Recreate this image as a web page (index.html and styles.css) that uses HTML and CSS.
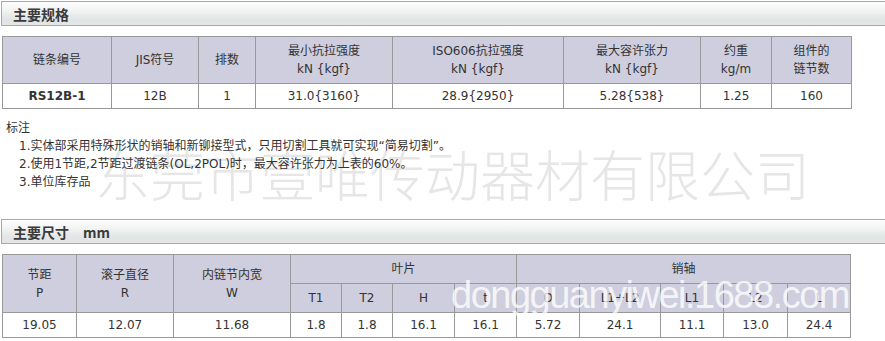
FILE: index.html
```html
<!DOCTYPE html>
<html lang="zh-CN">
<head>
<meta charset="utf-8">
<title>主要规格</title>
<link rel="stylesheet" href="styles.css">
</head>
<body>
<div class="page">
  <div class="watermark wm-cn">东莞市壹唯传动器材有限公司</div>

  <div class="bar"><span class="bar-title">主要规格</span></div>
  <table class="spec spec-main">
    <colgroup>
      <col style="width:109px"><col style="width:87px"><col style="width:57px"><col style="width:137px"><col style="width:171px"><col style="width:137px"><col style="width:71px"><col style="width:80px">
    </colgroup>
    <tr class="head-row tall">
      <th>链条编号</th>
      <th>JIS符号</th>
      <th>排数</th>
      <th>最小抗拉强度<br>kN {kgf}</th>
      <th>ISO606抗拉强度<br>kN {kgf}</th>
      <th>最大容许张力<br>kN {kgf}</th>
      <th>约重<br>kg/m</th>
      <th>组件的<br>链节数</th>
    </tr>
    <tr class="data-row">
      <td class="strong">RS12B-1</td>
      <td>12B</td>
      <td>1</td>
      <td>31.0{3160}</td>
      <td>28.9{2950}</td>
      <td>5.28{538}</td>
      <td>1.25</td>
      <td>160</td>
    </tr>
  </table>

  <div class="notes">
    <div class="notes-title">标注</div>
    <div class="note">1.实体部采用特殊形状的销轴和新铆接型式，只用切割工具就可实现“简易切割”。</div>
    <div class="note">2.使用1节距,2节距过渡链条(OL,2POL)时，最大容许张力为上表的60%。</div>
    <div class="note">3.单位库存品</div>
  </div>

  <div class="bar bar-second"><span class="bar-title">主要尺寸　mm</span></div>
  <table class="spec spec-dim">
    <colgroup>
      <col style="width:74px"><col style="width:97px"><col style="width:117px"><col style="width:51px"><col style="width:51px"><col style="width:62px"><col style="width:62px"><col style="width:63px"><col style="width:81px"><col style="width:63px"><col style="width:64px"><col style="width:63px">
    </colgroup>
    <tr class="head-row mid">
      <th rowspan="2">节距<br>P</th>
      <th rowspan="2">滚子直径<br>R</th>
      <th rowspan="2">内链节内宽<br>W</th>
      <th colspan="4">叶片</th>
      <th colspan="5">销轴</th>
    </tr>
    <tr class="head-row mid">
      <th>T1</th>
      <th>T2</th>
      <th>H</th>
      <th>t</th>
      <th>D</th>
      <th>L1+L2</th>
      <th>L1</th>
      <th>L2</th>
      <th>L</th>
    </tr>
    <tr class="data-row">
      <td>19.05</td>
      <td>12.07</td>
      <td>11.68</td>
      <td>1.8</td>
      <td>1.8</td>
      <td>16.1</td>
      <td>16.1</td>
      <td>5.72</td>
      <td>24.1</td>
      <td>11.1</td>
      <td>13.0</td>
      <td>24.4</td>
    </tr>
  </table>

  <div class="watermark wm-url">dongguanyiwei.1688.com</div>
</div>
</body>
</html>
```

FILE: styles.css
```css
html, body {
  margin: 0;
  padding: 0;
  background: #ffffff;
}

body {
  font-family: "DejaVu Sans", "Noto Sans CJK SC", sans-serif;
  font-size: 12px;
  color: #333333;
}

.page {
  position: relative;
  width: 885px;
  height: 341px;
  overflow: hidden;
  padding: 1px 0 0 1px;
  box-sizing: border-box;
}

.bar {
  position: relative;
  width: 880px;
  height: 23px;
  border: 1px solid #a9a9a9;
  background: linear-gradient(to bottom, #fdfdfd 0%, #f1f2f2 40%, #e2e5e5 75%, #e4e6e6 100%);
  display: flex;
  align-items: center;
  padding-left: 11px;
  box-sizing: content-box;
}

.bar-title {
  font-family: "Noto Sans CJK SC", "DejaVu Sans", sans-serif;
  font-weight: bold;
  font-size: 14px;
  color: #3a3a3a;
  line-height: 1;
}

.bar-second {
  margin-top: 28px;
}

.spec {
  position: relative;
  border-collapse: collapse;
  table-layout: fixed;
  margin: 10px 0 0 1px;
}

.spec-main { width: 850px; }
.spec-dim { width: 849px; }

.spec th,
.spec td {
  border: 1px solid #999999;
  padding: 0;
  text-align: center;
  vertical-align: middle;
  font-weight: normal;
  line-height: 18px;
  color: #333333;
}

.spec th {
  background: #cecede;
}

.head-row.tall th { height: 46px; }
.head-row.mid th { height: 28px; }
.data-row td { height: 24px; }

.strong {
  font-weight: bold !important;
  color: #222222;
}

.notes {
  position: relative;
  margin-top: 10px;
  line-height: 18px;
}

.notes-title {
  padding-left: 5px;
}

.note {
  padding-left: 18px;
}

.watermark {
  position: absolute;
  pointer-events: none;
  white-space: nowrap;
  line-height: 1;
}

.wm-cn {
  left: 95px;
  top: 145px;
  font-family: "Noto Sans CJK SC", sans-serif;
  font-weight: 300;
  font-size: 55px;
  color: #e6e6e6;
}

.wm-url {
  left: 451px;
  top: 276px;
  font-family: "Liberation Sans", sans-serif;
  font-size: 38px;
  letter-spacing: -1.5px;
  color: rgba(255, 255, 255, 0.8);
}
```
